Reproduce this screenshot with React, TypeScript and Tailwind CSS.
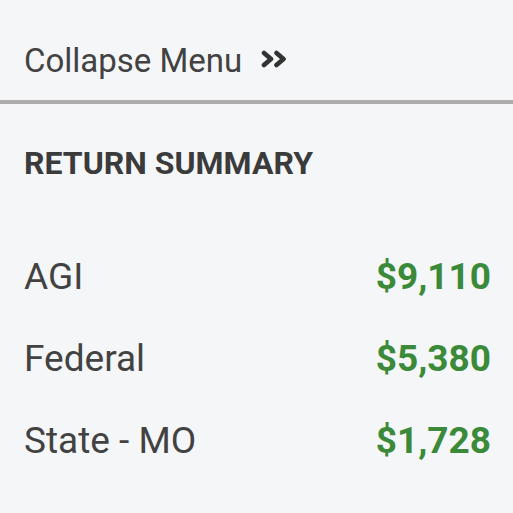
const summary = [
  { label: 'AGI', amount: '$9,110' },
  { label: 'Federal', amount: '$5,380' },
  { label: 'State - MO', amount: '$1,728' },
];

function DoubleChevron() {
  return (
    <svg width="27" height="18" viewBox="0 0 27 18" fill="none" stroke="currentColor" strokeWidth="4.6" strokeLinecap="round" strokeLinejoin="round">
      <polyline points="3,3 10,9 3,15" />
      <polyline points="15.5,3 22.5,9 15.5,15" />
    </svg>
  );
}

export default function App() {
  return (
    <div className="w-[513px] h-[513px] bg-[#f5f6f8] text-[#424242] font-['Roboto',sans-serif] overflow-hidden">
      <div className="h-[100px] flex items-start pl-6 pt-[44px]">
        <div className="flex items-center h-[33px]">
          <span className="text-[33px] leading-none">Collapse Menu</span>
          <span className="ml-[19px] mb-[3px] text-[#333]">
            <DoubleChevron />
          </span>
        </div>
      </div>
      <div className="h-[4px] bg-[#acacac]" />

      <div className="pl-6 pr-[22px]">
        <h2 className="mt-[43px] text-[32px] leading-none font-bold text-[#3b3b3b]">RETURN SUMMARY</h2>
        <div className="mt-[79px] flex flex-col gap-[45px]">
          {summary.map((row) => (
            <div key={row.label} className="flex justify-between items-center leading-none h-[37px]">
              <span className="text-[37px]">{row.label}</span>
              <span className="text-[37px] font-bold text-[#3b8a39]">{row.amount}</span>
            </div>
          ))}
        </div>
      </div>
    </div>
  );
}
